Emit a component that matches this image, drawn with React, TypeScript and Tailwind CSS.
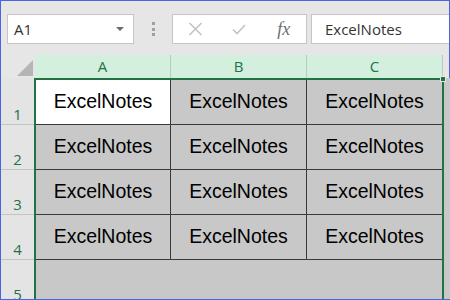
const UI_FONT = "font-['Open_Sans','Noto_Sans',sans-serif]";
const CELL_FONT = "font-['Liberation_Sans',Arial,sans-serif]";

const ROWS = [1, 2, 3, 4];
const COLS = ["A", "B", "C"];

function Toolbar() {
    return (
        <div className={`flex h-[54px] items-start bg-[#e6e6e6] border-r border-[#4a63e7] pl-[6px] pt-[13px] ${UI_FONT}`}>
            {/* Name box */}
            <div className="flex h-[30px] w-[127px] items-center justify-between border border-[#c6c6c6] bg-white pl-[6px] pr-[9px]">
                <span className="text-[15px] text-[#333]">A1</span>
                <span className="h-0 w-0 border-x-[4px] border-t-[4px] border-x-transparent border-t-[#6b6b6b]" />
            </div>

            {/* Separator dots */}
            <div className="flex h-[30px] w-[38px] flex-col items-center justify-center gap-[2.5px]">
                <span className="h-[3px] w-[3px] bg-[#a0a0a0]" />
                <span className="h-[3px] w-[3px] bg-[#a0a0a0]" />
                <span className="h-[3px] w-[3px] bg-[#a0a0a0]" />
            </div>

            {/* Cancel / enter / fx */}
            <div className="flex h-[30px] w-[135px] items-center border border-[#c6c6c6] bg-white">
                <div className="flex w-[45px] items-center justify-center">
                    <svg width="15" height="14" viewBox="0 0 15 14" fill="none" stroke="#c3c3c3" strokeWidth="1.6">
                        <path d="M1.5 1 L13.5 13 M13.5 1 L1.5 13" />
                    </svg>
                </div>
                <div className="flex w-[45px] items-center justify-center">
                    <svg width="14" height="11" viewBox="0 0 14 11" fill="none" stroke="#c3c3c3" strokeWidth="1.6">
                        <path d="M1 5.5 L5 9.5 L13 1" />
                    </svg>
                </div>
                <div className="flex w-[45px] items-center justify-center">
                    <span className="font-['Liberation_Serif',serif] text-[18px] italic leading-none text-[#6e6e6e]">fx</span>
                </div>
            </div>

            {/* Formula bar */}
            <div className="ml-[4px] flex h-[30px] flex-1 items-center border-y border-l border-[#c6c6c6] bg-white pl-[13px]">
                <span className="text-[15px] text-[#333]">ExcelNotes</span>
            </div>
        </div>
    );
}

function ColumnHeaders() {
    return (
        <div className={`flex h-[23px] bg-[#e6e6e6] border-r border-[#4a63e7] ${UI_FONT}`}>
            {/* Select all corner */}
            <div className="relative w-[34px]">
                <span className="absolute bottom-[2px] right-[2px] h-0 w-0 border-b-[16px] border-l-[16px] border-l-transparent border-b-[#b5b5b5]" />
            </div>
            {COLS.map((c) => (
                <div
                    key={c}
                    className="flex w-[136px] items-center justify-center border-r border-[#b9c9bf] bg-[#d3efde] text-[15px] text-[#217346]"
                >
                    {c}
                </div>
            ))}
        </div>
    );
}

export default function App() {
    return (
        <div className="h-[300px] w-[450px] overflow-hidden border-y border-l border-[#4a63e7] bg-[#c8c8c8]">
            <Toolbar />
            <ColumnHeaders />

            <div className="flex h-[221px]">
                {/* Row headers */}
                <div className={`flex w-[33px] flex-col bg-[#e4e4e4] ${UI_FONT}`}>
                    {[1, 2, 3, 4, 5].map((r) => (
                        <div
                            key={r}
                            className={`flex shrink-0 items-end justify-center border-b border-[#c4c4c4] text-[15px] leading-[20px] text-[#217346] ${r === 1 ? "h-[47px]" : "h-[45px]"}`}
                        >
                            {r}
                        </div>
                    ))}
                </div>

                {/* Selected range */}
                <div className="relative h-[250px] w-[410px] border-2 border-[#217346] bg-[#c8c8c8]">
                    {ROWS.map((r) => (
                        <div key={r} className="flex h-[45px] border-b border-[#3a3a3a]">
                            {COLS.map((c, i) => (
                                <div
                                    key={c}
                                    className={`flex items-center justify-center ${CELL_FONT} text-[19.5px] text-black
                                        ${i === 0 ? "w-[135px] border-r border-[#3a3a3a]" : ""}
                                        ${i === 1 ? "w-[136px] border-r border-[#3a3a3a]" : ""}
                                        ${i === 2 ? "flex-1" : ""}
                                        ${r === 1 && i === 0 ? "bg-white" : "bg-[#c8c8c8]"}`}
                                >
                                    ExcelNotes
                                </div>
                            ))}
                        </div>
                    ))}
                    {/* Fill handle */}
                    <span className="absolute -right-[4px] -top-[4px] h-[6px] w-[6px] border border-[#e6e6e6] bg-[#217346]" />
                </div>
            </div>
        </div>
    );
}
